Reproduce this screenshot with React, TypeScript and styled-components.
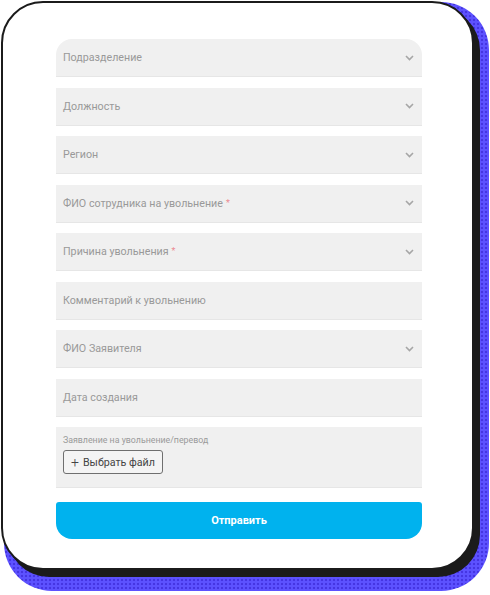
import React from 'react'
import styled, { createGlobalStyle } from 'styled-components'

const GlobalStyle = createGlobalStyle`
  html, body {
    margin: 0;
    padding: 0;
    background: #ffffff;
  }
  body {
    font-family: Roboto, 'Noto Sans', 'Liberation Sans', sans-serif;
  }
`

const Page = styled.main`
  position: relative;
  z-index: 0;
  padding: 1px 0 0 1px;
  width: 490px;
  height: 595px;
  box-sizing: border-box;
  overflow: hidden;
`

const Card = styled.section`
  position: relative;
  width: 473px;
  height: 569px;
  box-sizing: border-box;
  background: #ffffff;
  border: 2px solid #1b1b1b;
  border-radius: 42px;
  box-shadow: 6px 7px 0 #1b1b1b;
  padding: 36px 0 0 53px;

  &::before {
    content: '';
    position: absolute;
    top: -1px;
    left: 1px;
    right: -17px;
    bottom: -23px;
    z-index: -1;
    border-radius: 48px;
    background-color: #5d52ff;
    background-image: radial-gradient(circle, #4535e2 1px, transparent 1.6px);
    background-size: 4px 4px;
  }
`

const Form = styled.form`
  width: 366px;
  display: flex;
  flex-direction: column;
  gap: 10.5px;
`

const Field = styled.div<{ $first?: boolean }>`
  height: 38px;
  box-sizing: border-box;
  display: flex;
  align-items: center;
  justify-content: space-between;
  padding: 0 8px 0 7px;
  background: #f0f0f0;
  border-bottom: 1px solid #e6e6e6;
  border-radius: ${(p) => (p.$first ? '16px 16px 0 0' : '0')};
  font-size: 10.7px;
  color: #999999;
`

const Required = styled.span`
  color: #ec8a92;
  margin-left: 3px;
  font-size: 9px;
  vertical-align: 1px;
`

const Chevron = styled.svg`
  width: 9px;
  height: 6px;
  flex-shrink: 0;
`

const FileField = styled.div`
  height: 61px;
  box-sizing: border-box;
  background: #f0f0f0;
  border-bottom: 1px solid #e6e6e6;
  padding: 8px 7px 0 7px;
  display: flex;
  flex-direction: column;
  align-items: flex-start;
  gap: 5px;
`

const FileLabel = styled.div`
  font-size: 8.8px;
  color: #9a9a9a;
`

const FileButton = styled.button`
  height: 24px;
  padding: 0 7px;
  display: flex;
  align-items: center;
  gap: 4px;
  background: #f4f4f4;
  border: 1px solid #6f6f6f;
  border-radius: 3px;
  font-family: inherit;
  font-size: 10.7px;
  color: #444444;
`

const Plus = styled.span`
  font-size: 14px;
  line-height: 1;
  font-weight: 300;
`

const Submit = styled.button`
  margin-top: 3.5px;
  height: 37px;
  border: none;
  border-radius: 3px 3px 16px 16px;
  background: #00b2ee;
  color: #ffffff;
  font-family: inherit;
  font-size: 11px;
  font-weight: 700;
`

const fields: { label: string; select: boolean; required?: boolean }[] = [
  { label: 'Подразделение', select: true },
  { label: 'Должность', select: true },
  { label: 'Регион', select: true },
  { label: 'ФИО сотрудника на увольнение', select: true, required: true },
  { label: 'Причина увольнения', select: true, required: true },
  { label: 'Комментарий к увольнению', select: false },
  { label: 'ФИО Заявителя', select: true },
  { label: 'Дата создания', select: false },
]

const ChevronIcon = () => (
  <Chevron viewBox="0 0 9 6">
    <polyline points="1,1 4.5,4.5 8,1" fill="none" stroke="#a6a6a6" strokeWidth="1.6" />
  </Chevron>
)

export default function App() {
  return (
    <Page>
      <GlobalStyle />
      <Card>
        <Form onSubmit={(e) => e.preventDefault()}>
          {fields.map((f, i) => (
            <Field key={f.label} $first={i === 0}>
              <span>
                {f.label}
                {f.required && <Required>*</Required>}
              </span>
              {f.select && <ChevronIcon />}
            </Field>
          ))}
          <FileField>
            <FileLabel>Заявление на увольнение/перевод</FileLabel>
            <FileButton type="button">
              <Plus>+</Plus>
              Выбрать файл
            </FileButton>
          </FileField>
          <Submit type="submit">Отправить</Submit>
        </Form>
      </Card>
    </Page>
  )
}
